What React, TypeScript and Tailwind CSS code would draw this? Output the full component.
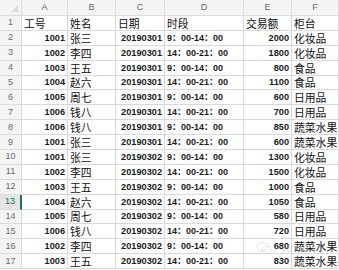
import React from "react";

const rows: [string, string, string, string, string, string][] = [
  ["1001", "张三", "20190301", "9：00-14：00", "2000", "化妆品"],
  ["1002", "李四", "20190301", "14：00-21：00", "1800", "化妆品"],
  ["1003", "王五", "20190301", "9：00-14：00", "800", "食品"],
  ["1004", "赵六", "20190301", "14：00-21：00", "1100", "食品"],
  ["1005", "周七", "20190301", "9：00-14：00", "600", "日用品"],
  ["1006", "钱八", "20190301", "14：00-21：00", "700", "日用品"],
  ["1006", "钱八", "20190301", "9：00-14：00", "850", "蔬菜水果"],
  ["1001", "张三", "20190301", "14：00-21：00", "600", "蔬菜水果"],
  ["1001", "张三", "20190302", "9：00-14：00", "1300", "化妆品"],
  ["1002", "李四", "20190302", "14：00-21：00", "1500", "化妆品"],
  ["1003", "王五", "20190302", "9：00-14：00", "1000", "食品"],
  ["1004", "赵六", "20190302", "14：00-21：00", "1050", "食品"],
  ["1005", "周七", "20190302", "9：00-14：00", "580", "日用品"],
  ["1006", "钱八", "20190302", "14：00-21：00", "720", "日用品"],
  ["1002", "李四", "20190302", "9：00-14：00", "680", "蔬菜水果"],
  ["1003", "王五", "20190302", "14：00-21：00", "830", "蔬菜水果"],
];

const grid = "grid grid-cols-[22px_46px_48px_49px_79px_48px_1fr]";
const cell = "border-r border-b border-[#d9d9d9] whitespace-nowrap flex items-end";
const num = "justify-end pr-[2px] text-[9.2px] font-bold text-[#1a1a1a] [font-family:'Liberation_Sans',Arial,sans-serif] leading-[11px] pb-[1px]";
const cjk = "pl-[2px] text-[10.8px] text-[#111] [font-family:'Noto_Sans_CJK_SC',sans-serif] leading-[13px]";
const hdr = "bg-[#f4f4f4] border-r border-b border-[#dcdcdc] flex items-center justify-center text-[9px] leading-[11px] text-[#6a6a6a] [font-family:'Liberation_Sans',Arial,sans-serif]";

export default function App() {
  return (
    <div className="relative w-[339px] h-[270px] overflow-hidden bg-white">
      <div className={`${grid} h-[16px]`}>
        <div className={`${hdr} relative`}>
          <div className="absolute right-[3px] bottom-[3px] w-0 h-0 border-l-[7px] border-l-transparent border-b-[7px] border-b-[#dcdcdc]" />
        </div>
        {["A", "B", "C", "D", "E", "F"].map((c) => (
          <div key={c} className={hdr}>{c}</div>
        ))}
      </div>
      <div className={`${grid} h-[14.9px]`}>
        <div className={hdr}>1</div>
        {["工号", "姓名", "日期", "时段", "交易额", "柜台"].map((t) => (
          <div key={t} className={`${cell} ${cjk}`}>{t}</div>
        ))}
      </div>
      {rows.map((r, i) => {
        const n = i + 2;
        const sel = n === 13;
        return (
          <div key={n} className={`${grid} h-[14.9px]`}>
            <div
              className={
                sel
                  ? "bg-[#e4e4e4] border-r-2 border-b border-r-[#217346] border-b-[#dcdcdc] flex items-center justify-center text-[9px] leading-[11px] text-[#217346] [font-family:'Liberation_Sans',Arial,sans-serif]"
                  : hdr
              }
            >
              {n}
            </div>
            <div className={`${cell} ${num}`}>{r[0]}</div>
            <div className={`${cell} ${cjk}`}>{r[1]}</div>
            <div className={`${cell} ${num}`}>{r[2]}</div>
            <div className={`${cell} pl-[2px] text-[9px] font-bold text-[#1a1a1a] [font-family:'Liberation_Sans','Noto_Sans_CJK_SC',sans-serif] leading-[11px] pb-[1px]`}>
              {r[3]}
            </div>
            <div className={`${cell} ${num}`}>{r[4]}</div>
            <div className={`${cell} ${cjk}`}>{r[5]}</div>
          </div>
        );
      })}
      <div className="absolute left-[256px] top-[241px] flex items-center gap-[2px] opacity-30 pointer-events-none">
        <svg width="16" height="14" viewBox="0 0 18 16">
          <ellipse cx="7" cy="6.5" rx="6" ry="5" fill="none" stroke="#999" strokeWidth="1" />
          <ellipse cx="12" cy="10" rx="5" ry="4" fill="none" stroke="#999" strokeWidth="1" />
        </svg>
        <span className="text-[11px] leading-[12px] text-[#999] [font-family:'Liberation_Sans',sans-serif]">Python</span>
      </div>
    </div>
  );
}
